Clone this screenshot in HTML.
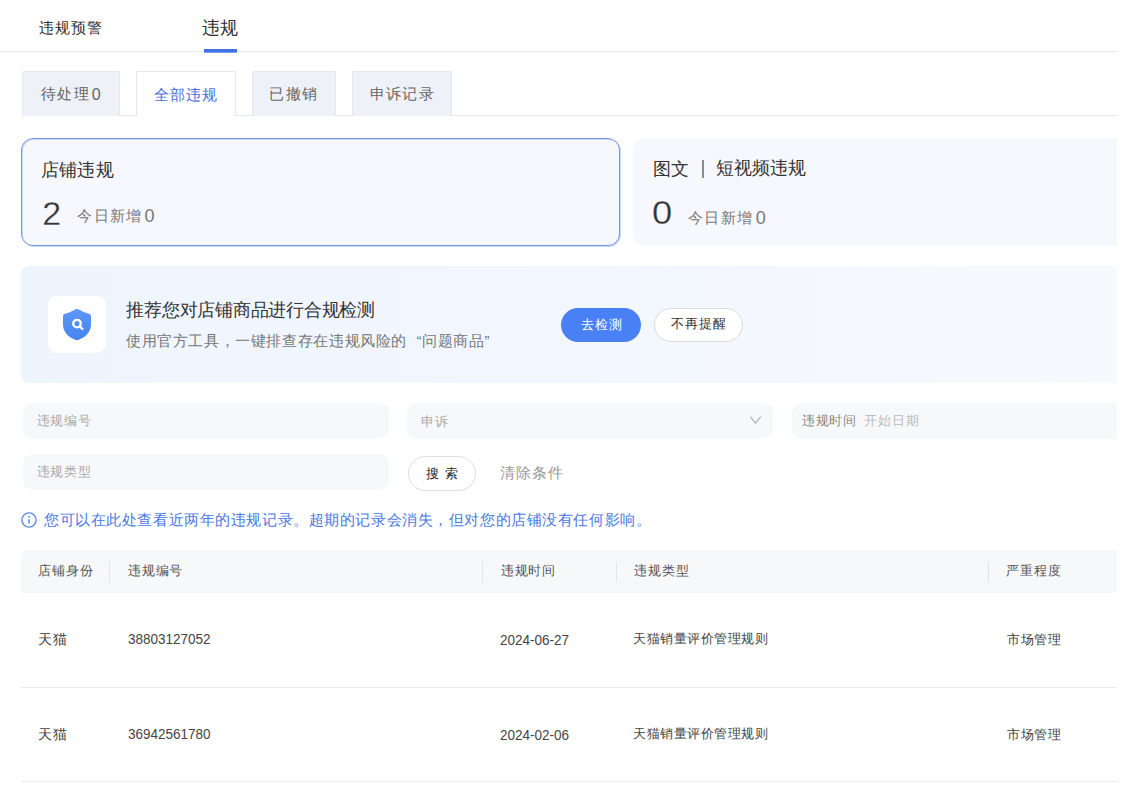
<!DOCTYPE html>
<html><head><meta charset="utf-8">
<style>
*{box-sizing:border-box;margin:0;padding:0}
html,body{width:1140px;height:806px;overflow:hidden;background:#fff}
body{position:relative;font-family:"Liberation Sans",sans-serif;color:#333}
.a{position:absolute;white-space:nowrap}
.t{line-height:1}
.tab{top:71px;height:45px;background:#eef1f7;border:1px solid #e4e7ee;border-bottom:none;border-radius:2px 2px 0 0}
.tab.on{background:#fff}
.inp{height:36px;background:#f7f8fa;border-radius:10px}
.dv{top:562px;width:1px;height:20px;background:#e3e3e3}
.ql{display:inline-block;width:1em;text-align:right}
.qr{display:inline-block;width:1em;text-align:left}
</style></head><body>
<div class="a" style="left:0;top:0;width:1117px;height:806px;overflow:hidden">
<!-- top tabs -->
<div class="a" style="left:0;top:51px;width:1140px;height:1px;background:#e8e8e8"></div>
<div class="a" style="left:204px;top:49px;width:33px;height:4px;background:linear-gradient(#3f72e2 0,#3f72e2 3px,#7d9fe8 3px)"></div>

<!-- sub tabs -->
<div class="a" style="left:22px;top:115px;width:1120px;height:1px;background:#e6e6e6"></div>
<div class="a tab" style="left:22px;width:98px"></div>
<div class="a tab on" style="left:136px;width:100px"></div>
<div class="a tab" style="left:252px;width:84px"></div>
<div class="a tab" style="left:352px;width:100px"></div>

<!-- stat cards -->
<div class="a" style="left:21px;top:138px;width:599px;height:108px;background:#f7f8fd;border:1px solid #7a96d8;border-radius:12px;box-shadow:inset 1px 1px 0 rgba(150,182,245,0.5),1px 1px 0 rgba(150,182,245,0.5)"></div>
<div class="a" style="left:633px;top:138px;width:520px;height:108px;background:#f7f8fd;border-radius:12px"></div>

<div class="a" style="left:702px;top:160px;width:2px;height:18px;background:#8c8c84"></div>
<!-- banner -->
<div class="a" style="left:21px;top:266px;width:1096px;height:117px;background:linear-gradient(90deg,#eff5fe 0%,#f3f7fe 60%,#f8f9fe 100%);border-radius:8px 0 0 8px"></div>
<div class="a" style="left:48px;top:296px;width:58px;height:57px;background:#fff;border-radius:9px"></div>
<svg class="a" style="left:60px;top:306px" width="34" height="38" viewBox="0 0 34 38">
  <defs><linearGradient id="g" x1="0" y1="0" x2="0" y2="1"><stop offset="0" stop-color="#5e97f5"/><stop offset="1" stop-color="#4484f2"/></linearGradient></defs>
  <path d="M17 2.9 Q16.3 2.9 15.6 3.3 C12.5 5 8.5 7.2 4.5 8 Q3 8.4 3 10 L3 18.5 C3 26 8.5 31.5 15.8 33.9 Q17 34.3 18.2 33.9 C25.5 31.5 31 26 31 18.5 L31 10 Q31 8.4 29.5 8 C25.5 7.2 21.5 5 18.4 3.3 Q17.7 2.9 17 2.9 Z" fill="url(#g)"/>
  <circle cx="17" cy="17.6" r="3.75" fill="none" stroke="#fff" stroke-width="2.4"/>
  <path d="M20 20.6 L22.4 23" stroke="#fff" stroke-width="2.3" stroke-linecap="round"/>
</svg>
<div class="a" style="left:561px;top:308px;width:80px;height:34px;background:#4a80f5;border-radius:17px"></div>
<div class="a" style="left:654px;top:308px;width:89px;height:34px;background:#fff;border:1px solid #dcdcdc;border-radius:17px"></div>

<!-- filters -->
<div class="a inp" style="left:23px;top:403px;width:366px"></div>
<div class="a inp" style="left:407px;top:403px;width:366px"></div>
<svg class="a" style="left:749px;top:415px" width="13" height="10" viewBox="0 0 13 10"><path d="M1.2 1.6 L6.5 8.2 L11.8 1.6" fill="none" stroke="#b5b5b5" stroke-width="1.35"/></svg>
<div class="a inp" style="left:792px;top:403px;width:360px"></div>
<div class="a inp" style="left:23px;top:454px;width:366px"></div>
<div class="a" style="left:408px;top:456px;width:68px;height:35px;background:#fff;border:1px solid #dedede;border-radius:18px"></div>

<!-- info -->
<svg class="a" style="left:21px;top:512px" width="16" height="16" viewBox="0 0 16 16"><circle cx="8" cy="8" r="7.1" fill="none" stroke="#5f8ae3" stroke-width="1.4"/><rect x="7.2" y="7.3" width="1.6" height="4.2" fill="#5f8ae3"/><rect x="7.2" y="3.9" width="1.6" height="1.8" fill="#5f8ae3"/></svg>

<!-- table -->
<div class="a" style="left:21px;top:550px;width:1130px;height:43px;background:#f7f8fa;border-radius:8px 0 0 0"></div>
<div class="a dv" style="left:109px"></div>
<div class="a dv" style="left:482px"></div>
<div class="a dv" style="left:616px"></div>
<div class="a dv" style="left:988px"></div>
<div class="a" style="left:21px;top:687px;width:1130px;height:1px;background:#ececec"></div>
<div class="a" style="left:21px;top:781px;width:1130px;height:1px;background:#ececec"></div>
</div>

<div class="a t" style="left:38.6px;top:20.2px;font-size:15px;color:#333;letter-spacing:1.13px">违规预警</div>
<div class="a t" style="left:202.0px;top:18.7px;font-size:18px;color:#333;letter-spacing:-0.5px">违规</div>
<div class="a t" style="left:41.0px;top:85.9px;font-size:15px;color:#666;letter-spacing:1.4px">待处理</div>
<div class="a t" style="left:91.8px;top:86.6px;font-size:16px;color:#666">0</div>
<div class="a t" style="left:153.8px;top:87.2px;font-size:15px;color:#4a6ee0;letter-spacing:1.2px">全部违规</div>
<div class="a t" style="left:269.0px;top:85.9px;font-size:15px;color:#666;letter-spacing:1.5px">已撤销</div>
<div class="a t" style="left:370.0px;top:85.9px;font-size:15px;color:#666;letter-spacing:1.17px">申诉记录</div>
<div class="a t" style="left:41.0px;top:160.5px;font-size:18px;color:#333;letter-spacing:0.2px">店铺违规</div>
<div class="a t" style="left:42.2px;top:195.7px;font-size:34px;color:#333;-webkit-text-stroke:0.3px #f7f8fd">2</div>
<div class="a t" style="left:77.3px;top:208.0px;font-size:15px;color:#777;letter-spacing:1.3px">今日新增</div>
<div class="a t" style="left:144.6px;top:207.0px;font-size:18px;color:#777">0</div>
<div class="a t" style="left:653.0px;top:159.5px;font-size:18px;color:#333;letter-spacing:0.3px">图文</div>
<div class="a t" style="left:716.3px;top:159.4px;font-size:18px;color:#333;letter-spacing:-0.07px">短视频违规</div>
<div class="a t" style="left:652.2px;top:194.6px;font-size:34px;color:#333;-webkit-text-stroke:0.3px #f7f8fd;display:inline-block;transform:scaleX(1.07);transform-origin:0 0">0</div>
<div class="a t" style="left:688.2px;top:210.2px;font-size:15px;color:#777;letter-spacing:1.27px">今日新增</div>
<div class="a t" style="left:755.8px;top:209.2px;font-size:18px;color:#777">0</div>
<div class="a t" style="left:126.4px;top:301.0px;font-size:18px;color:#333;letter-spacing:-0.26px">推荐您对店铺商品进行合规检测</div>
<div class="a t" style="left:126.0px;top:333.1px;font-size:15px;color:#777;letter-spacing:0.61px">使用官方工具，一键排查存在违规风险的<span class=ql>“</span>问题商品<span class=qr>”</span></div>
<div class="a t" style="left:581.0px;top:317.8px;font-size:13px;color:#fff;letter-spacing:0.85px">去检测</div>
<div class="a t" style="left:671.0px;top:317.4px;font-size:13px;color:#333;letter-spacing:1.0px">不再提醒</div>
<div class="a t" style="left:36.7px;top:414.2px;font-size:13px;color:#aaa;letter-spacing:0.7px">违规编号</div>
<div class="a t" style="left:421.0px;top:414.8px;font-size:13px;color:#aaa;letter-spacing:1.0px">申诉</div>
<div class="a t" style="left:801.8px;top:414.2px;font-size:13px;color:#888;letter-spacing:0.73px">违规时间</div>
<div class="a t" style="left:864.4px;top:413.6px;font-size:13px;color:#bbb;letter-spacing:0.8px">开始日期</div>
<div class="a t" style="left:36.7px;top:465.2px;font-size:13px;color:#aaa;letter-spacing:0.7px">违规类型</div>
<div class="a t" style="left:425.7px;top:466.5px;font-size:13px;color:#222;letter-spacing:5.9px">搜索</div>
<div class="a t" style="left:499.7px;top:465.1px;font-size:15px;color:#999;letter-spacing:1.27px">清除条件</div>
<div class="a t" style="left:44.0px;top:512.0px;font-size:15px;color:#4a78e4;letter-spacing:0.57px">您可以在此处查看近两年的违规记录。超期的记录会消失，但对您的店铺没有任何影响。</div>
<div class="a t" style="left:37.8px;top:564.2px;font-size:13px;color:#555;letter-spacing:1.2px">店铺身份</div>
<div class="a t" style="left:128.2px;top:564.2px;font-size:13px;color:#555;letter-spacing:0.77px">违规编号</div>
<div class="a t" style="left:501.4px;top:564.2px;font-size:13px;color:#555;letter-spacing:0.37px">违规时间</div>
<div class="a t" style="left:634.0px;top:564.2px;font-size:13px;color:#555;letter-spacing:0.87px">违规类型</div>
<div class="a t" style="left:1005.7px;top:564.4px;font-size:13px;color:#555;letter-spacing:1.2px">严重程度</div>
<div class="a t" style="left:37.8px;top:632.3px;font-size:14px;color:#444;letter-spacing:1.2px">天猫</div>
<div class="a t" style="left:127.6px;top:631.3px;font-size:15px;color:#444;display:inline-block;transform:scaleX(0.9);transform-origin:0 0">38803127052</div>
<div class="a t" style="left:500.0px;top:631.5px;font-size:15px;color:#444;display:inline-block;transform:scaleX(0.9);transform-origin:0 0">2024-06-27</div>
<div class="a t" style="left:633.0px;top:632.2px;font-size:13px;color:#444;letter-spacing:0.52px">天猫销量评价管理规则</div>
<div class="a t" style="left:1007.0px;top:633.0px;font-size:13px;color:#444;letter-spacing:0.67px">市场管理</div>
<div class="a t" style="left:37.8px;top:727.3px;font-size:14px;color:#444;letter-spacing:1.2px">天猫</div>
<div class="a t" style="left:127.6px;top:726.3px;font-size:15px;color:#444;display:inline-block;transform:scaleX(0.9);transform-origin:0 0">36942561780</div>
<div class="a t" style="left:500.0px;top:726.5px;font-size:15px;color:#444;display:inline-block;transform:scaleX(0.9);transform-origin:0 0">2024-02-06</div>
<div class="a t" style="left:633.0px;top:727.2px;font-size:13px;color:#444;letter-spacing:0.52px">天猫销量评价管理规则</div>
<div class="a t" style="left:1007.0px;top:728.0px;font-size:13px;color:#444;letter-spacing:0.67px">市场管理</div>
</body></html>
